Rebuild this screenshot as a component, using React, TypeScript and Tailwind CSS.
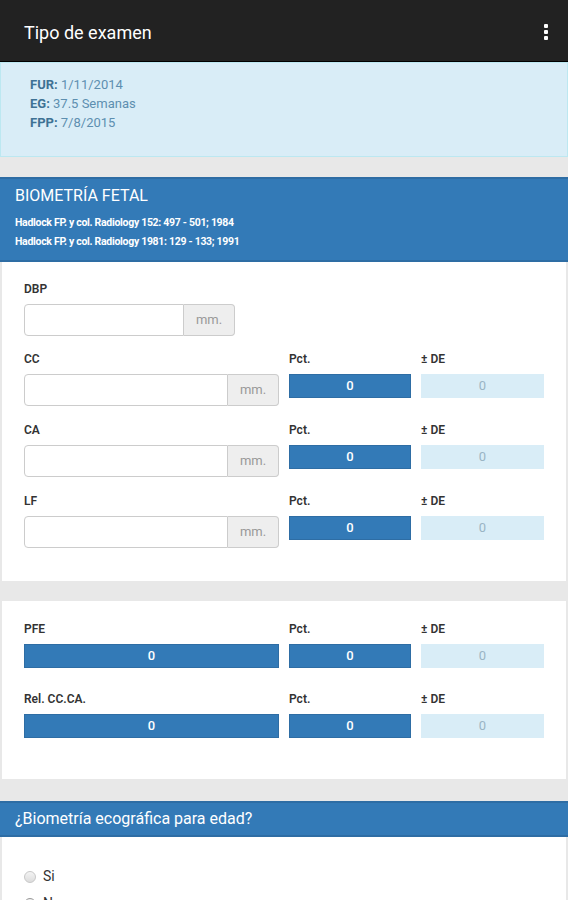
import React from 'react';

// Android-style "Tipo de examen" screen: dark action bar, info alert, and
// Bootstrap-like panels holding fetal biometry inputs and computed values.

const font = { fontFamily: 'Roboto, "Liberation Sans", sans-serif' };

function Label({ children }: { children: React.ReactNode }) {
  return <div className="h-5 text-[12px] font-semibold leading-5 text-[#333]">{children}</div>;
}

function MmInput({ width }: { width: string }) {
  return (
    <div className={`mt-[5px] flex h-8 ${width}`}>
      <div className="flex-1 rounded-l-[4px] border border-[#ccc] bg-white" />
      <div className="flex w-[51px] items-center justify-center rounded-r-[4px] border border-l-0 border-[#ccc] bg-[#eee] text-[13px] text-[#999]">
        mm.
      </div>
    </div>
  );
}

function DarkValue() {
  return (
    <div className="mt-[5px] flex h-6 items-center justify-center border border-[#2e6da4] bg-[#337ab7] text-[13px] font-medium text-white">
      0
    </div>
  );
}

function LightValue() {
  return (
    <div className="mt-[5px] flex h-6 items-center justify-center bg-[#d9edf7] text-[13px] text-[#9ab4c4]">0</div>
  );
}

function MeasureRow({ name }: { name: string }) {
  return (
    <div className="grid grid-cols-[255px_122px_123px] gap-x-[10px]">
      <div>
        <Label>{name}</Label>
        <MmInput width="w-full" />
      </div>
      <div>
        <Label>Pct.</Label>
        <DarkValue />
      </div>
      <div>
        <Label>± DE</Label>
        <LightValue />
      </div>
    </div>
  );
}

function ResultRow({ name }: { name: string }) {
  return (
    <div className="grid grid-cols-[255px_122px_123px] gap-x-[10px]">
      <div>
        <Label>{name}</Label>
        <DarkValue />
      </div>
      <div>
        <Label>Pct.</Label>
        <DarkValue />
      </div>
      <div>
        <Label>± DE</Label>
        <LightValue />
      </div>
    </div>
  );
}

export default function App() {
  return (
    <div className="min-h-[1000px] w-[568px] bg-[#e8e8e8]" style={font}>
      {/* action bar */}
      <header className="flex h-[62px] items-center justify-between border-b border-black bg-[#222] pl-6 pr-[20px] pt-[3px]">
        <h1 className="text-[18px] text-white">Tipo de examen</h1>
        <div className="flex flex-col gap-[2px]">
          <span className="h-[4px] w-[4px] rounded-[1px] bg-white" />
          <span className="h-[4px] w-[4px] rounded-[1px] bg-white" />
          <span className="h-[4px] w-[4px] rounded-[1px] bg-white" />
        </div>
      </header>

      {/* dates alert */}
      <div className="h-[95px] border border-[#bce8f1] bg-[#d9edf7] pl-[29px] pt-[12px] text-[13px] leading-[19px] text-[#5d8fb0]">
        <div>
          <b className="text-[#3e7294]">FUR:</b> 1/11/2014
        </div>
        <div>
          <b className="text-[#3e7294]">EG:</b> 37.5 Semanas
        </div>
        <div>
          <b className="text-[#3e7294]">FPP:</b> 7/8/2015
        </div>
      </div>

      <div className="h-5" />

      {/* biometría fetal */}
      <section className="border-y-2 border-[#2e6da4] bg-[#337ab7] px-[15px] pb-[9px] pt-[6px] text-white">
        <h2 className="text-[16px] leading-[22px]">BIOMETRÍA FETAL</h2>
        <p className="mt-[6px] text-[10.5px] font-bold leading-[19px] tracking-[-0.3px]">
          Hadlock FP. y col. Radiology 152: 497 - 501; 1984
        </p>
        <p className="text-[10.5px] font-bold leading-[19px] tracking-[-0.3px]">
          Hadlock FP. y col. Radiology 1981: 129 - 133; 1991
        </p>
      </section>

      <div className="mx-[2px] flex flex-col gap-[14px] bg-white px-[22px] pb-[33px] pt-[17px]">
        <div className="mb-[-1px]">
          <Label>DBP</Label>
          <MmInput width="w-[211px]" />
        </div>
        <MeasureRow name="CC" />
        <MeasureRow name="CA" />
        <MeasureRow name="LF" />
      </div>

      <div className="h-5" />

      <div className="mx-[2px] flex flex-col gap-[21px] bg-white px-[22px] pb-[41px] pt-[18px]">
        <ResultRow name="PFE" />
        <ResultRow name="Rel. CC.CA." />
      </div>

      <div className="h-[22px]" />

      {/* question panel */}
      <section className="border-y-2 border-[#2e6da4] bg-[#337ab7] px-[15px] py-[5px] text-white">
        <h2 className="text-[16px] leading-[22px]">¿Biometría ecográfica para edad?</h2>
      </section>

      <div className="mx-[2px] flex flex-col gap-[6px] bg-white px-[22px] pb-8 pt-[29px] text-[14px] text-[#333]">
        <label className="flex items-center gap-[7px]">
          <span className="h-3 w-3 rounded-full border border-[#c8c8c8] bg-gradient-to-b from-[#f4f4f4] to-[#dcdcdc]" />
          Si
        </label>
        <label className="flex items-center gap-[7px]">
          <span className="flex h-3 w-3 items-center justify-center rounded-full border border-[#999] bg-[#eee]">
            <span className="h-[6px] w-[6px] rounded-full bg-[#444]" />
          </span>
          No
        </label>
      </div>
    </div>
  );
}
